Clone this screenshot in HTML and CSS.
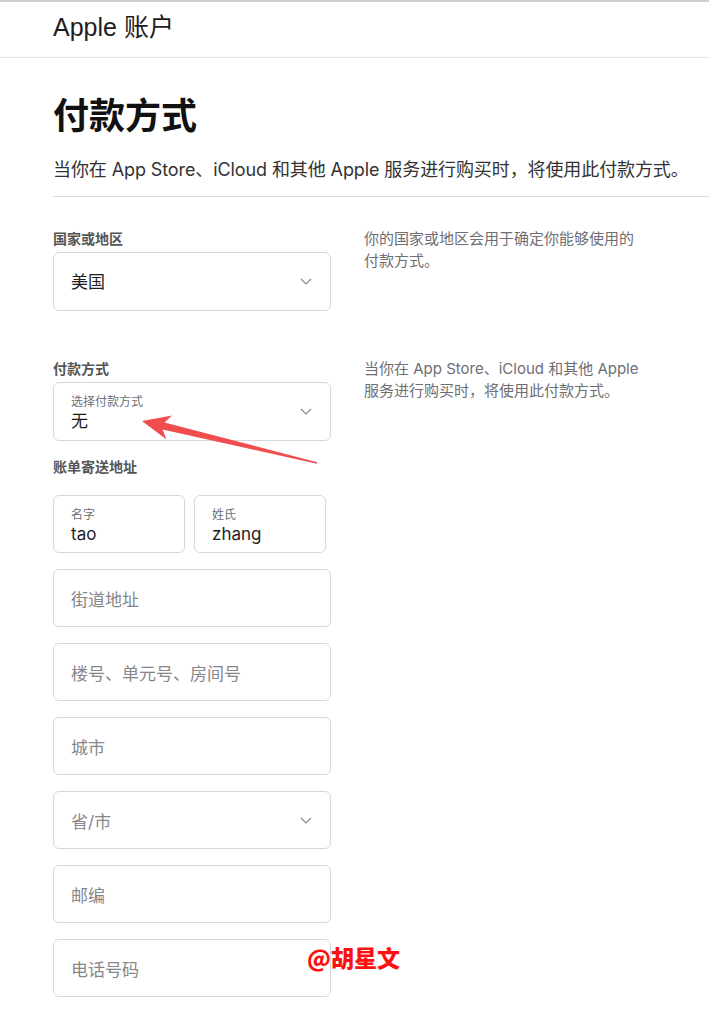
FILE: index.html
```html
<!DOCTYPE html>
<html lang="zh-CN">
<head>
<meta charset="utf-8">
<title>Apple 账户</title>
<link rel="stylesheet" href="styles.css">
</head>
<body>
<header class="topbar">
  <div class="brand">Apple 账户</div>
</header>
<main class="page">
  <section class="intro">
    <h1 class="title">付款方式</h1>
    <p class="lead">当你在 App Store、iCloud 和其他 Apple 服务进行购买时，将使用此付款方式。</p>
  </section>

  <section class="row row-country">
    <div class="col-form">
      <div class="label">国家或地区</div>
      <div class="field select">
        <span class="value">美国</span>
        <svg class="chev" width="12" height="7" viewBox="0 0 12 7"><path d="M1 1l5 5 5-5" fill="none" stroke="#8a8a8a" stroke-width="1.2"/></svg>
      </div>
    </div>
    <p class="note">你的国家或地区会用于确定你能够使用的付款方式。</p>
  </section>

  <section class="row row-pay">
    <div class="col-form">
      <div class="label">付款方式</div>
      <div class="field select stacked">
        <div class="stack">
          <span class="small">选择付款方式</span>
          <span class="value">无</span>
        </div>
        <svg class="chev" width="12" height="7" viewBox="0 0 12 7"><path d="M1 1l5 5 5-5" fill="none" stroke="#8a8a8a" stroke-width="1.2"/></svg>
      </div>
      <div class="label label-bill">账单寄送地址</div>
      <div class="fields">
        <div class="name-row">
          <div class="field stacked name">
            <div class="stack"><span class="small">名字</span><span class="value">tao</span></div>
          </div>
          <div class="field stacked name">
            <div class="stack"><span class="small">姓氏</span><span class="value">zhang</span></div>
          </div>
        </div>
        <div class="field"><span class="ph">街道地址</span></div>
        <div class="field"><span class="ph">楼号、单元号、房间号</span></div>
        <div class="field"><span class="ph">城市</span></div>
        <div class="field select"><span class="ph">省/市</span>
          <svg class="chev" width="12" height="7" viewBox="0 0 12 7"><path d="M1 1l5 5 5-5" fill="none" stroke="#8a8a8a" stroke-width="1.2"/></svg>
        </div>
        <div class="field"><span class="ph">邮编</span></div>
        <div class="field"><span class="ph">电话号码</span></div>
      </div>
    </div>
    <p class="note">当你在 App Store、iCloud 和其他 Apple 服务进行购买时，将使用此付款方式。</p>
  </section>
</main>

<svg class="arrow" width="709" height="1024" viewBox="0 0 709 1024">
  <polygon points="142,421 172,415.5 164.5,422.5 317.2,462.2 316.8,463.8 162.5,429.5 166.5,439.5" fill="#f04e4e"/>
</svg>
<div class="watermark">@胡星文</div>
</body>
</html>
```

FILE: styles.css
```css
* { box-sizing: border-box; }
html, body { margin: 0; padding: 0; background: #fff; }
body {
  font-family: "Inter", "Noto Sans CJK SC", sans-serif;
  color: #1d1d1f;
  position: relative;
  width: 709px;
  min-height: 1024px;
  overflow: hidden;
}
.topbar {
  height: 58px;
  border-top: 2px solid #cfcfcf;
  border-bottom: 1px solid #e3e3e3;
  padding-left: 53px;
  display: flex;
  align-items: center;
}
.brand {
  font-family: "Liberation Sans", "Noto Sans CJK SC", sans-serif;
  font-size: 25px;
  line-height: 30px;
  color: #1d1d1f;
  margin-top: -5px;
}
.page { padding-left: 53px; }
.intro { border-bottom: 1px solid #dcdcdc; padding-bottom: 13px; }
.title {
  margin: 33px 0 0;
  font-size: 36px;
  line-height: 44px;
  font-weight: 700;
  font-family: "Noto Sans CJK SC", sans-serif;
  color: #111;
}
.lead {
  margin: 22px 0 0;
  font-size: 18px;
  line-height: 26px;
  color: #333;
  white-space: nowrap;
  letter-spacing: -0.1px;
}
.row {
  display: grid;
  grid-template-columns: 278px 280px;
  column-gap: 33px;
}
.row-country { margin-top: 31px; }
.row-pay { margin-top: 47px; }
.label {
  font-size: 14px;
  line-height: 20px;
  font-weight: 700;
  color: #555;
  font-family: "Noto Sans CJK SC", sans-serif;
  margin-bottom: 4px;
}
.label-bill { margin-top: 15px; margin-bottom: 19px; }
.note {
  margin: 0;
  font-size: 15px;
  line-height: 22px;
  color: #6e6e73;
  width: 278px;
}
.fields { display: flex; flex-direction: column; gap: 16px; }
.name-row { display: flex; gap: 9px; }
.field {
  height: 59px;
  border: 1px solid #d8d8d8;
  border-radius: 6px;
  padding: 0 17px;
  display: flex;
  align-items: center;
  justify-content: space-between;
  background: #fff;
}
.fields .field { height: 58px; }
.field.name { width: 132px; }
.field.name .stack { padding-top: 4px; }
.value { font-size: 17px; color: #1d1d1f; line-height: 22px; }
.ph { font-size: 17px; color: #86868b; }
.stack { display: flex; flex-direction: column; padding-top: 2px; }
.small { font-size: 12px; line-height: 16px; color: #6e6e73; }
.chev { margin-right: 1px; flex: none; }
.arrow { position: absolute; left: 0; top: 0; pointer-events: none; }
.watermark {
  position: absolute;
  left: 307px;
  top: 942px;
  font-size: 23px;
  line-height: 30px;
  font-weight: 900;
  color: #ff1010;
  font-family: "Noto Sans CJK SC", sans-serif;
}
```
